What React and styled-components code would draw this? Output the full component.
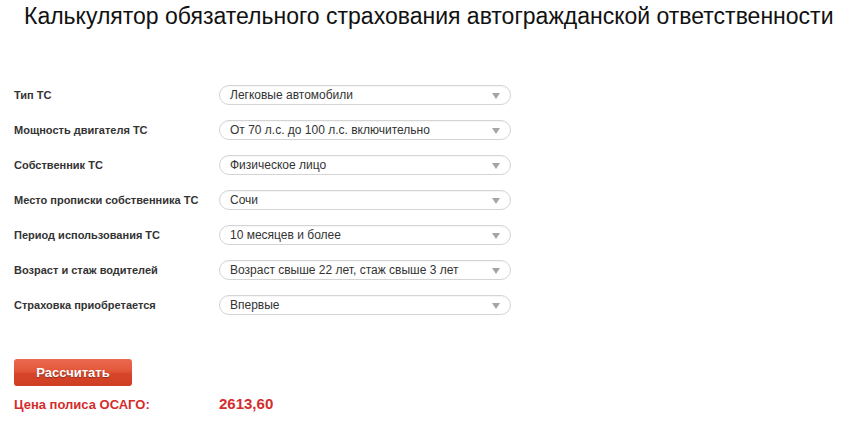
import React from 'react'
import styled, { createGlobalStyle } from 'styled-components'

const GlobalStyle = createGlobalStyle`
  body {
    margin: 0;
    background: #ffffff;
    font-family: "Liberation Sans", Arial, sans-serif;
  }
`

const fields = [
  { label: 'Тип ТС', value: 'Легковые автомобили' },
  { label: 'Мощность двигателя ТС', value: 'От 70 л.с. до 100 л.с. включительно' },
  { label: 'Собственник ТС', value: 'Физическое лицо' },
  { label: 'Место прописки собственника ТС', value: 'Сочи' },
  { label: 'Период использования ТС', value: '10 месяцев и более' },
  { label: 'Возраст и стаж водителей', value: 'Возраст свыше 22 лет, стаж свыше 3 лет' },
  { label: 'Страховка приобретается', value: 'Впервые' },
]

const App = () => {
  return (
    <Page>
      <GlobalStyle />
      <Title>Калькулятор обязательного страхования автогражданской ответственности</Title>
      <Form>
        {fields.map((f) => (
          <Row key={f.label}>
            <Label>{f.label}</Label>
            <Select>
              <span>{f.value}</span>
              <Arrow />
            </Select>
          </Row>
        ))}
      </Form>
      <Button>Рассчитать</Button>
      <Result>
        <ResultLabel>Цена полиса ОСАГО:</ResultLabel>
        <ResultValue>2613,60</ResultValue>
      </Result>
    </Page>
  )
}

export default App

const Page = styled.div`
  width: 850px;
  height: 429px;
  padding: 0 14px;
  box-sizing: border-box;
  overflow: hidden;
`

const Title = styled.h1`
  margin: 0;
  padding: 3px 0 0 10px;
  font-size: 23px;
  font-weight: normal;
  line-height: 26px;
  color: #111;
  white-space: nowrap;
`

const Form = styled.div`
  margin-top: 56px;
  display: flex;
  flex-direction: column;
  gap: 15px;
`

const Row = styled.div`
  display: flex;
  align-items: center;
  height: 20px;
`

const Label = styled.div`
  width: 205px;
  font-size: 11px;
  font-weight: bold;
  color: #333;
`

const Select = styled.div`
  width: 292px;
  height: 20px;
  box-sizing: border-box;
  border: 1px solid #d4d4d4;
  border-radius: 10px;
  display: flex;
  align-items: center;
  justify-content: space-between;
  padding: 0 10px 0 10px;
  font-size: 12px;
  color: #333;
  box-shadow: inset 0 1px 1px rgba(0, 0, 0, 0.04);
`

const Arrow = styled.span`
  width: 0;
  height: 0;
  border-left: 4px solid transparent;
  border-right: 4px solid transparent;
  border-top: 6px solid #a5a5a5;
  margin-top: 1px;
`

const Button = styled.div`
  margin-top: 44px;
  width: 118px;
  height: 27px;
  box-sizing: border-box;
  border-radius: 3px;
  background: linear-gradient(to bottom, #ec6a52 0%, #e25639 45%, #d6452a 55%, #cf3f24 100%);
  display: flex;
  align-items: center;
  justify-content: center;
  color: #fff;
  font-size: 13px;
  font-weight: bold;
  text-shadow: 0 1px 1px rgba(0, 0, 0, 0.35);
`

const Result = styled.div`
  margin-top: 9px;
  display: flex;
  align-items: baseline;
`

const ResultLabel = styled.div`
  width: 205px;
  font-size: 13px;
  font-weight: bold;
  color: #d42c2c;
`

const ResultValue = styled.div`
  font-size: 15px;
  font-weight: bold;
  color: #d42c2c;
`
